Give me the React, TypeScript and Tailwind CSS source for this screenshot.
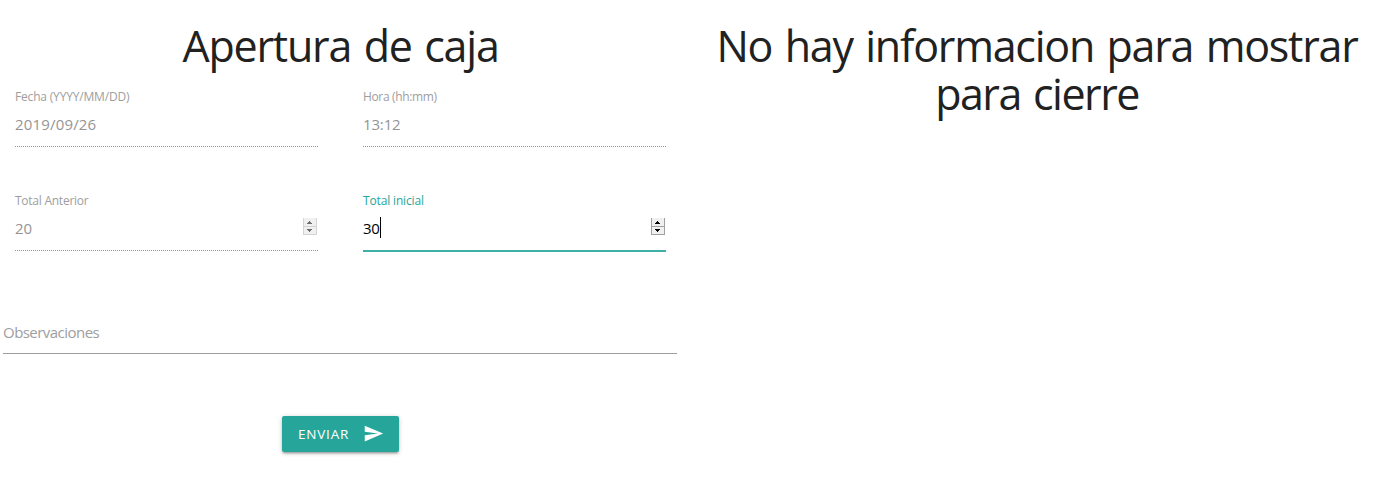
import type { ReactNode } from "react";

function Heading({ children }: { children: ReactNode }) {
  return (
    <h3 className="text-center text-[43px] leading-[48px] tracking-[-1.2px] text-[#212121] [word-spacing:2.5px]">
      {children}
    </h3>
  );
}

function Spinner({ active = false }: { active?: boolean }) {
  const arrow = active ? "#000" : "#6d6d6d";
  const edge = active ? "#a0a0a0" : "#d4d4d4";
  return (
    <svg width="14" height="17" viewBox="0 0 14 17" shapeRendering="crispEdges" className={active ? "mr-px mb-[8px]" : "mr-px mb-[7px]"}>
      <rect width="14" height="17" fill={edge} />
      <rect x="1" y="0" width="12" height="8" fill="#f0f0f0" />
      <rect x="1" y="9" width="12" height="7" fill="#f0f0f0" />
      <path d="M6 3h1v1h1v1h1v1H4V5h1V4h1z" fill={arrow} />
      <path d="M4 11h5v1H8v1H7v1H6v-1H5v-1H4z" fill={arrow} />
    </svg>
  );
}

type FieldProps = { label: string; value: string; numeric?: boolean; active?: boolean; tracking: string; valueTracking?: string };

function Field({ label, value, numeric, active, tracking, valueTracking = "tracking-[-0.15px]" }: FieldProps) {
  return (
    <div className="h-[104px] w-[303px]">
      <div className={`h-[18px] text-[12px] leading-[18px] ${tracking} ${active ? "text-[#26a69a]" : "text-[#9e9e9e]"}`}>
        {label}
      </div>
      <div
        className={`flex items-center justify-between text-[15px] ${
          active
            ? "h-[42px] border-b-2 border-[#3fb0a5] text-black"
            : "h-[41px] border-b border-dotted border-[#949494] text-[#949494]"
        }`}
      >
        <div className="flex h-[40px] items-center pb-[4px]">
          <span className={valueTracking}>{value}</span>
          {active && <span className="mb-[2px] h-[21px] w-px bg-black" />}
        </div>
        {numeric && <Spinner active={active} />}
      </div>
    </div>
  );
}

export default function App() {
  return (
    <main className="flex h-[498px] w-[1378px] overflow-hidden bg-white pt-[22px] font-['Open_Sans','Noto_Sans',sans-serif]">
      <section className="w-[681px]">
        <Heading>Apertura de caja</Heading>
        <form className="flex flex-col">
          <div className="mt-[18px] grid grid-cols-[303px_303px] gap-x-[45px] pl-[15px]">
            <Field label="Fecha (YYYY/MM/DD)" value="2019/09/26" tracking="tracking-[-0.18px]" valueTracking="tracking-[0.17px]" />
            <Field label="Hora (hh:mm)" value="13:12" tracking="tracking-[-0.35px]" />
            <Field label="Total Anterior" value="20" numeric tracking="tracking-[-0.25px]" />
            <Field label="Total inicial" value="30" numeric active tracking="tracking-[-0.15px]" valueTracking="tracking-[-0.25px]" />
          </div>
          <div className="ml-[3px] mt-[17px] flex h-[41px] w-[674px] items-center border-b border-[#9e9e9e] pb-[2px] text-[15px] tracking-[-0.54px] text-[#9e9e9e]">
            Observaciones
          </div>
          <button
            type="button"
            className="ml-[282px] mt-[62px] flex h-[36px] w-[117px] items-center rounded-[2px] bg-[#26a69a] pl-[16px] text-[14px] text-white shadow-[0_2px_2px_0_rgba(0,0,0,0.14),0_3px_1px_-2px_rgba(0,0,0,0.12),0_1px_5px_0_rgba(0,0,0,0.2)]"
          >
            <span className="w-[65px] pt-px text-left text-[13.5px] tracking-[0.8px]">ENVIAR</span>
            <svg width="21" height="21" viewBox="0 0 24 24" fill="currentColor" className="mb-px">
              <path d="M2.01 21L23 12 2.01 3 2 10l15 2-15 2z" />
            </svg>
          </button>
        </form>
      </section>
      <section className="ml-[15px] w-[682px]">
        <Heading>
          <span className="tracking-[-1.24px]">No hay informacion para mostrar</span>
          <br />
          <span className="tracking-[-1.5px]">para cierre</span>
        </Heading>
      </section>
    </main>
  );
}
